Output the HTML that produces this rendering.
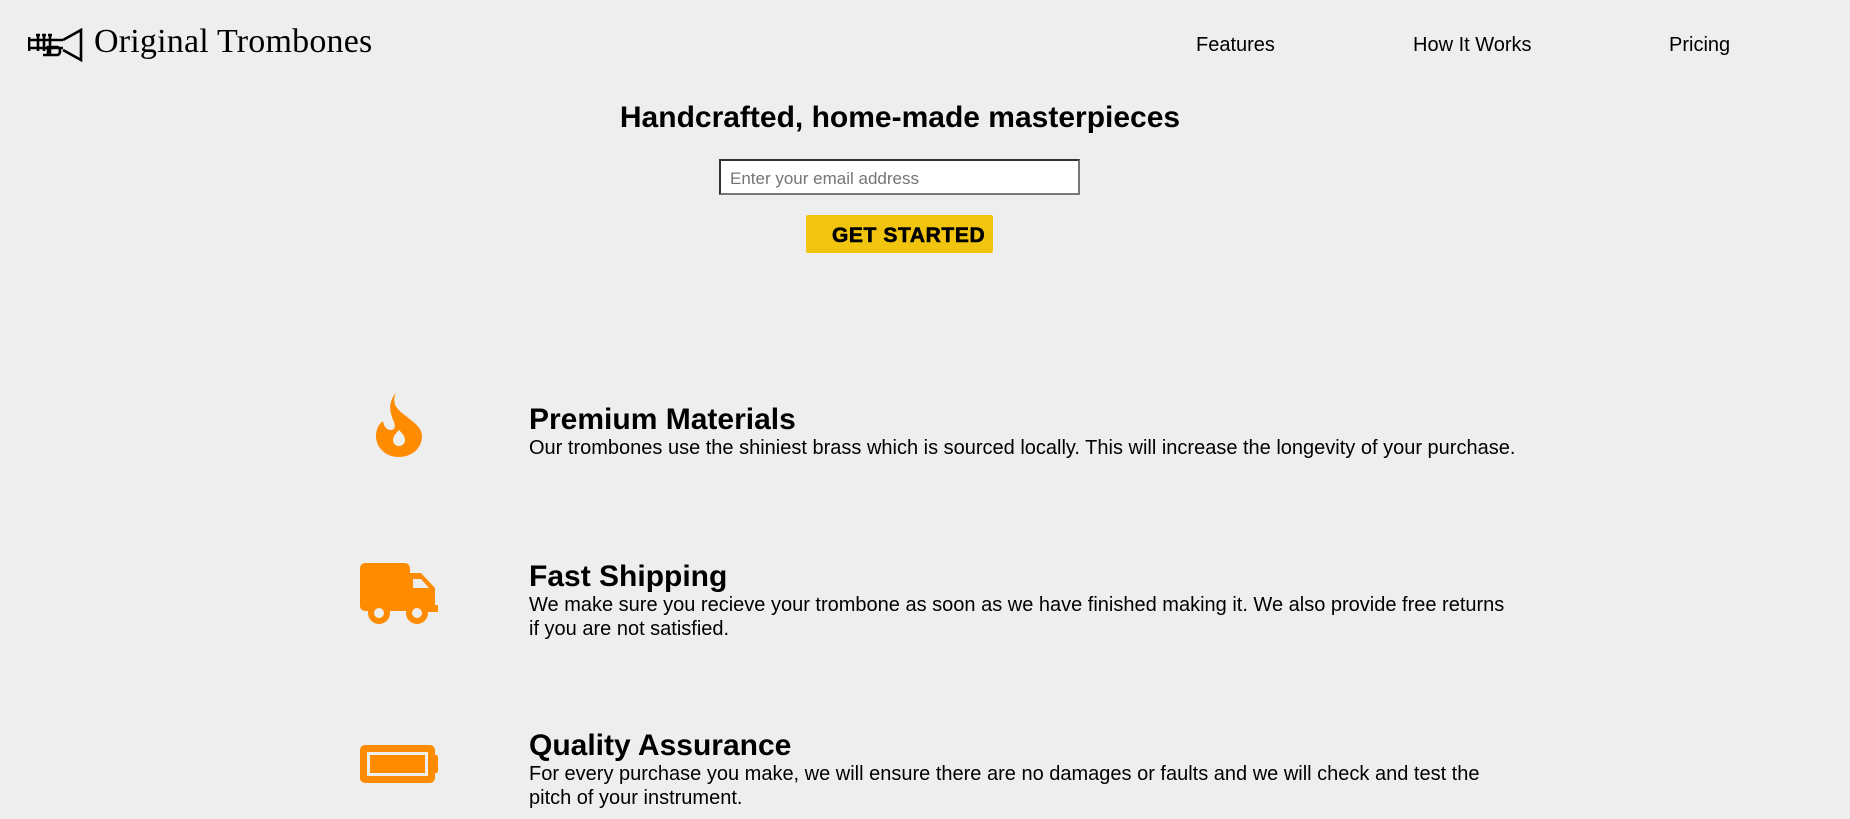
<!DOCTYPE html>
<html><head><meta charset="utf-8"><style>
*{margin:0;padding:0;box-sizing:border-box}
body{width:1850px;height:819px;background:#eeeeee;font-family:"Liberation Sans",Arial,sans-serif;color:#000;position:relative;overflow:hidden}
.abs{position:absolute}
.logo{left:94px;top:23px;font-family:"Liberation Serif",serif;font-size:34px;white-space:nowrap;letter-spacing:0.2px}
.nav{top:34px;font-size:20px}
h1{position:absolute;left:0;width:1800px;text-align:center;top:101px;font-size:30px;font-weight:bold}
.input{left:719px;top:159px;width:361px;height:36px;background:#fff;border:2px solid #333;border-right-color:#777;border-bottom-color:#777;font-size:17px;color:#757575;padding:8px 0 0 9px}
.btn{left:806px;top:215px;width:187px;height:38px;background:#f1c40f;border-radius:2px;font-weight:bold;font-size:21px;padding:9px 0 0 26px;letter-spacing:0.6px;-webkit-text-stroke:0.6px #000}
.ft{left:529px;width:1100px}
.ft h2{font-size:30px;font-weight:bold;line-height:34px}
.ft p{font-size:20px;line-height:23.5px;white-space:nowrap}
</style></head><body>
<svg class="abs" style="left:28px;top:28px" width="56" height="34" viewBox="0 0 56 34" fill="none" stroke="#000" stroke-width="2.6">
<path d="M1 9v14M1 12h34M1 20h34M35 12l18-10v30l-18-10"/>
<path d="M10 7v16M16 7v16M22 7v20M8 7h4M14 7h4M20 7h4M15 27h14c4 0 4-8 0-8h-9v8"/>
</svg>
<div class="abs logo">Original Trombones</div>
<div class="abs nav" style="left:1196px">Features</div>
<div class="abs nav" style="left:1413px">How It Works</div>
<div class="abs nav" style="left:1669px">Pricing</div>
<h1>Handcrafted, home-made masterpieces</h1>
<div class="abs input">Enter your email address</div>
<div class="abs btn">GET STARTED</div>

<svg class="abs" style="left:374px;top:393px" width="50" height="64" viewBox="0 0 50 64">
<path fill="#ff8c00" fill-rule="evenodd" d="M22 0c-4 8-1 14 6 20 10 8 20 14 20 23 0 12-10 21-23 21S2 55 2 43c0-7 3-12 7-15 1 6 4 9 8 9 3 0 5-3 3-8-3-7-5-13-3-20 1-4 3-7 5-9z M25 37c-4 4-6 7-6 10 0 4 3 6 6 6s6-2 6-6c0-3-2-6-6-10z"/>
</svg>
<svg class="abs" style="left:360px;top:563px" width="78" height="62" viewBox="0 0 78 62">
<rect x="0" y="0" width="50" height="48" rx="5" fill="#ff8c00"/>
<path fill="#ff8c00" d="M48 10h13l14 15v17h3v7H48z"/>
<path fill="#eeeeee" d="M53 16h8l8 9H53z"/>
<circle cx="19" cy="50" r="11" fill="#ff8c00"/><circle cx="19" cy="50" r="5" fill="#eeeeee"/>
<circle cx="57" cy="50" r="11" fill="#ff8c00"/><circle cx="57" cy="50" r="5" fill="#eeeeee"/>
</svg>
<svg class="abs" style="left:360px;top:745px" width="78" height="38" viewBox="0 0 78 38">
<rect x="0" y="0" width="75" height="38" rx="5" fill="#ff8c00"/>
<rect x="72" y="10" width="6" height="18" rx="2" fill="#ff8c00"/>
<rect x="7" y="7" width="61" height="24" fill="#eeeeee"/>
<rect x="10" y="10" width="55" height="18" fill="#ff8c00"/>
</svg>

<div class="abs ft" style="top:403px"><h2>Premium Materials</h2><p>Our trombones use the shiniest brass which is sourced locally. This will increase the longevity of your purchase.</p></div>
<div class="abs ft" style="top:560px"><h2>Fast Shipping</h2><p>We make sure you recieve your trombone as soon as we have finished making it. We also provide free returns<br>if you are not satisfied.</p></div>
<div class="abs ft" style="top:729px"><h2>Quality Assurance</h2><p>For every purchase you make, we will ensure there are no damages or faults and we will check and test the<br>pitch of your instrument.</p></div>
</body></html>
